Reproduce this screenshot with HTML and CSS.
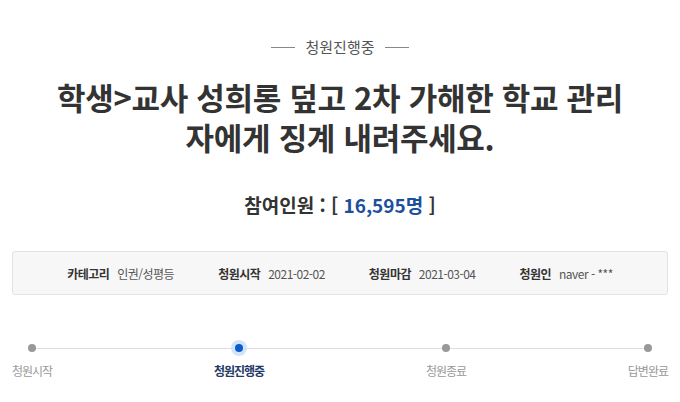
FILE: index.html
```html
<!DOCTYPE html>
<html lang="ko">
  <head>
    <meta charset="UTF-8" />
    <meta name="viewport" content="width=device-width, initial-scale=1" />
    <title>청원진행중</title>
    <link rel="stylesheet" href="styles.css">
  </head>
  <body>
    <div class="status"><span>청원진행중</span></div>

    <h3 class="title">학생&gt;교사 성희롱 덮고 2차 가해한 학교 관리자에게 징계 내려주세요.</h3>

    <h2 class="count">참여인원 : [ <span>16,595명</span> ]</h2>

    <ul class="info">
      <li><b>카테고리</b> 인권/성평등</li>
      <li><b>청원시작</b> 2021-02-02</li>
      <li><b>청원마감</b> 2021-03-04</li>
      <li><b>청원인</b> naver - ***</li>
    </ul>

    <ol class="steps">
      <li><i></i><span>청원시작</span></li>
      <li class="on"><i></i><span>청원진행중</span></li>
      <li><i></i><span>청원종료</span></li>
      <li><i></i><span>답변완료</span></li>
    </ol>
  </body>
</html>
```

FILE: styles.css
```css
body {
  margin: 0;
  padding: 0 12px;
  font-family: "Noto Sans CJK KR", "Noto Sans", sans-serif;
  color: #333;
  background: #fff;
}
.status {
  margin-top: 37px;
  display: flex;
  justify-content: center;
  align-items: center;
  gap: 10px;
  font-size: 15px;
  line-height: 20px;
  color: #555;
}
.status::before,
.status::after {
  content: "";
  width: 24px;
  height: 1px;
  background: #888;
}
.title {
  width: 586px;
  margin: 20px auto 0;
  text-align: center;
  font-size: 31px;
  letter-spacing: -0.3px;
  line-height: 40px;
  font-weight: bold;
  color: #333;
}
.count {
  margin: 34px 0 0;
  text-align: center;
  font-size: 19px;
  line-height: 28px;
  font-weight: bold;
  color: #333;
}
.count span {
  color: #1c4f9c;
}
.info {
  list-style: none;
  margin: 32px 0 0;
  padding: 0;
  height: 44px;
  box-sizing: border-box;
  border: 1px solid #e3e3e3;
  border-radius: 3px;
  background: #f7f7f7;
  display: flex;
  justify-content: center;
  align-items: center;
  gap: 44px;
  font-size: 12px;
  letter-spacing: -0.5px;
  color: #555;
}
.info b {
  color: #333;
  margin-right: 5px;
}
.steps {
  list-style: none;
  margin: 45px 0 0;
  padding: 0;
  position: relative;
  display: flex;
  justify-content: space-between;
}
.steps::before {
  content: "";
  position: absolute;
  left: 22px;
  right: 22px;
  top: 8px;
  height: 1px;
  background: #ddd;
}
.steps li {
  position: relative;
  display: flex;
  flex-direction: column;
  align-items: center;
  gap: 6px;
  font-size: 12px;
  letter-spacing: -1px;
  line-height: 18px;
  color: #999;
}
.steps i {
  display: block;
  width: 8px;
  height: 8px;
  margin: 4px 0;
  border-radius: 50%;
  background: #999;
}
.steps .on {
  color: #233a66;
  font-weight: bold;
}
.steps .on i {
  background: #0b5ccc;
  box-shadow: 0 0 0 4px #d3e3f8;
}
```
